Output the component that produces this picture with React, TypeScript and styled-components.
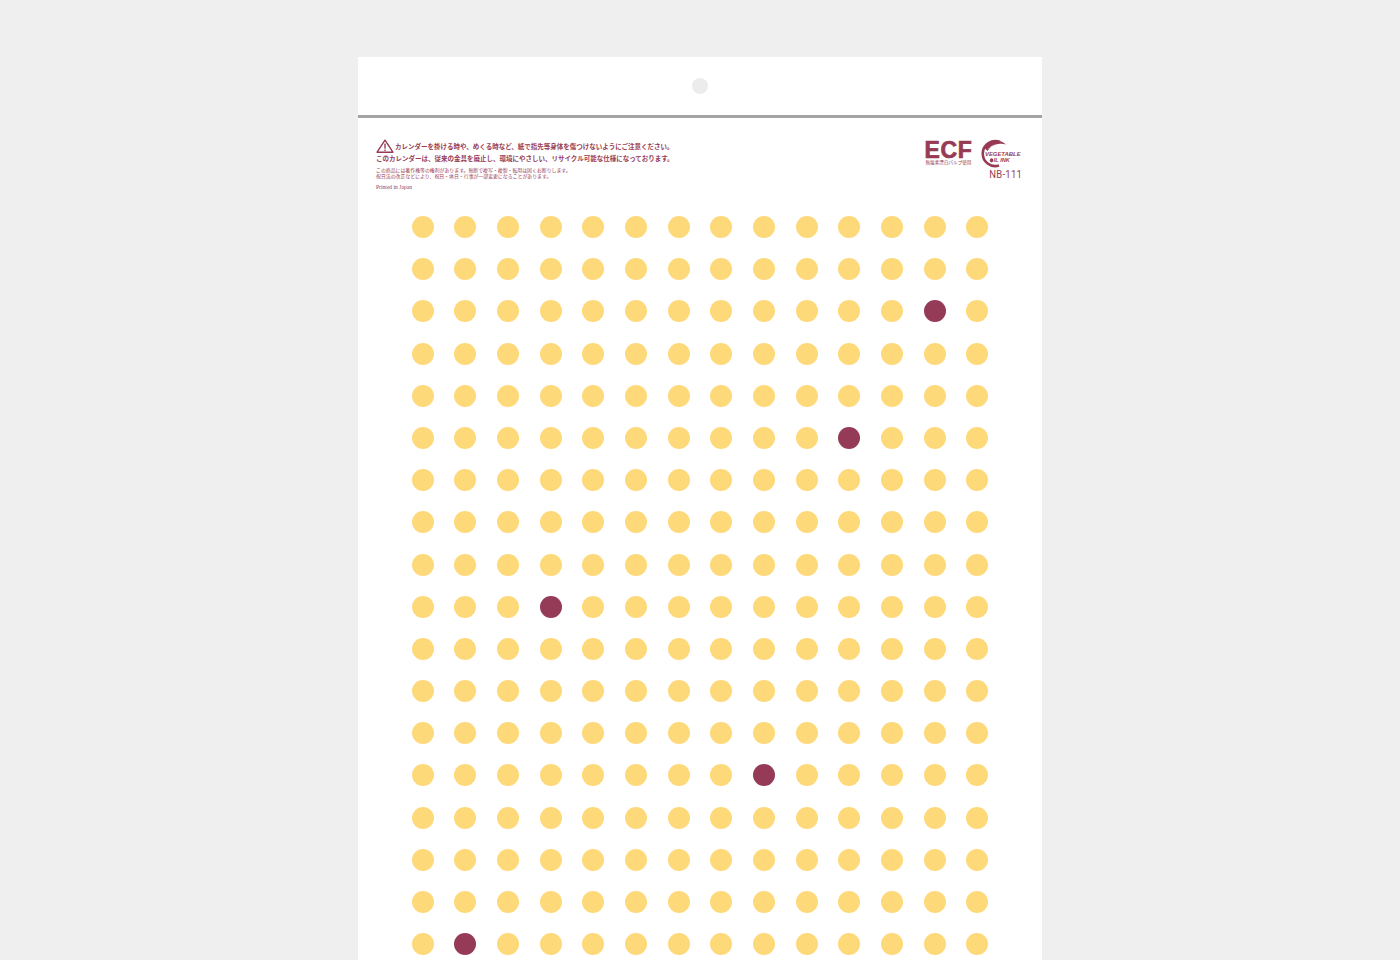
import styled, { createGlobalStyle } from 'styled-components'

const GlobalStyle = createGlobalStyle`
  html, body {
    margin: 0;
    padding: 0;
    background: #efefef;
  }
  body {
    font-family: "Noto Sans CJK JP", "Noto Sans", sans-serif;
  }
`

const INK = '#973b55'

const Page = styled.div`
  padding-top: 57px;
  display: flex;
  justify-content: center;
`

const Sheet = styled.div`
  width: 684px;
  background: #fff;
  padding-bottom: 40px;
`

const HangerStrip = styled.div`
  height: 58px;
  display: flex;
  align-items: center;
  justify-content: center;
  border-bottom: 3px solid #a3a3a3;
`

const Hole = styled.div`
  width: 16px;
  height: 16px;
  border-radius: 50%;
  background: #ececec;
`

const Header = styled.div`
  display: flex;
  justify-content: space-between;
  align-items: flex-start;
  padding: 19px 20px 0 18px;
`

const Notes = styled.div`
  display: flex;
  flex-direction: column;
  padding-top: 2px;
  color: ${INK};
`

const WarnRow = styled.div`
  display: flex;
  align-items: center;
  height: 14px;
  gap: 1px;
`

const NoteLine = styled.div<{ $size: number; $lh: number; $weight?: number; $mt?: number }>`
  font-size: ${({ $size }) => $size}px;
  line-height: ${({ $lh }) => $lh}px;
  font-weight: ${({ $weight }) => $weight ?? 400};
  margin-top: ${({ $mt }) => $mt ?? 0}px;
  white-space: nowrap;
`

const Printed = styled.div`
  font-family: "Liberation Serif", serif;
  font-size: 5.6px;
  line-height: 6px;
  margin-top: 5px;
  color: ${INK};
`

const Marks = styled.div`
  display: flex;
  flex-direction: column;
  align-items: flex-end;
  color: ${INK};
`

const LogoRow = styled.div`
  display: flex;
  align-items: flex-start;
  gap: 4px;
  height: 30px;
`

const Ecf = styled.div`
  display: flex;
  flex-direction: column;
  align-items: center;
  margin-top: 4px;
  width: 51px;
`

const EcfWord = styled.div`
  font-family: "Liberation Sans", Arial, sans-serif;
  font-weight: 700;
  font-size: 23px;
  line-height: 18px;
  height: 18px;
  letter-spacing: 0.6px;
  -webkit-text-stroke: 0.7px ${INK};
`

const EcfSub = styled.div`
  font-size: 4.6px;
  line-height: 6px;
  white-space: nowrap;
`

const Code = styled.div`
  font-family: Roboto, "Liberation Sans", sans-serif;
  font-weight: 400;
  font-size: 11px;
  line-height: 12px;
  margin-top: 2px;
  letter-spacing: 0.3px;
  transform: scaleX(0.86);
  transform-origin: right center;
`

const DotGrid = styled.div`
  margin-top: 26px;
  padding: 0 53.5px;
  display: grid;
  grid-template-columns: repeat(14, 22px);
  justify-content: space-between;
  row-gap: 20.2px;
`

const Dot = styled.div<{ $marked: boolean }>`
  width: 22px;
  height: 22px;
  border-radius: 50%;
  background: ${({ $marked }) => ($marked ? '#953b57' : '#fed97a')};
`

function WarningIcon() {
  return (
    <svg width="18" height="14" viewBox="0 0 18 14">
      <path d="M9 1.2 L16.9 13.2 H1.1 Z" fill="none" stroke={INK} strokeWidth="1.4" strokeLinejoin="round" />
      <rect x="8.3" y="4.6" width="1.4" height="5" fill={INK} />
      <rect x="8.3" y="10.6" width="1.4" height="1.4" fill={INK} />
    </svg>
  )
}

function VegetableInk() {
  return (
    <svg width="44" height="31" viewBox="0 0 44 31">
      <path d="M22 5 A12.5 12.5 0 1 0 21 28.5" fill="none" stroke={INK} strokeWidth="2.6" />
      <path d="M6.5 11 C10 3 21 1 28 7.5 C22 5.5 14 7.5 9.5 14 Z" fill={INK} />
      <path d="M10.5 12 C13.5 8.5 17.5 7.5 21 8.2" fill="none" stroke="#fff" strokeWidth="0.7" />
      <text x="7" y="19.2" fontFamily="Liberation Sans, sans-serif" fontWeight="700" fontStyle="italic" fontSize="5.9" fill={INK}>VEGETABLE</text>
      <ellipse cx="13.6" cy="23.3" rx="1.7" ry="2.1" fill={INK} />
      <text x="15.8" y="25.3" fontFamily="Liberation Sans, sans-serif" fontWeight="700" fontStyle="italic" fontSize="5.6" fill={INK}>IL INK</text>
    </svg>
  )
}

const ROWS = 18
const COLS = 14
const marked = new Set(['2-12', '5-10', '9-3', '13-8', '17-1'])

export default function App() {
  const dots = []
  for (let r = 0; r < ROWS; r++) {
    for (let c = 0; c < COLS; c++) {
      dots.push(<Dot key={`${r}-${c}`} $marked={marked.has(`${r}-${c}`)} />)
    }
  }

  return (
    <>
      <GlobalStyle />
      <Page>
        <Sheet>
          <HangerStrip>
            <Hole />
          </HangerStrip>
          <Header>
            <Notes>
              <WarnRow>
                <WarningIcon />
                <NoteLine $size={6.5} $lh={10} $weight={700}>
                  カレンダーを掛ける時や、めくる時など、紙で指先等身体を傷つけないようにご注意ください。
                </NoteLine>
              </WarnRow>
              <NoteLine $size={6.5} $lh={10} $weight={700}>
                このカレンダーは、従来の金具を廃止し、環境にやさしい、リサイクル可能な仕様になっております。
              </NoteLine>
              <NoteLine $size={4.9} $lh={6} $mt={4}>
                この商品には著作権等の権利があります。無断で複写・複製・転用は固くお断りします。
              </NoteLine>
              <NoteLine $size={4.9} $lh={6}>
                祝日法の改正などにより、祝日・休日・行事が一部変更になることがあります。
              </NoteLine>
              <Printed>Printed in Japan</Printed>
            </Notes>
            <Marks>
              <LogoRow>
                <Ecf>
                  <EcfWord>ECF</EcfWord>
                  <EcfSub>無塩素漂白パルプ使用</EcfSub>
                </Ecf>
                <VegetableInk />
              </LogoRow>
              <Code>NB-111</Code>
            </Marks>
          </Header>
          <DotGrid>{dots}</DotGrid>
        </Sheet>
      </Page>
    </>
  )
}
